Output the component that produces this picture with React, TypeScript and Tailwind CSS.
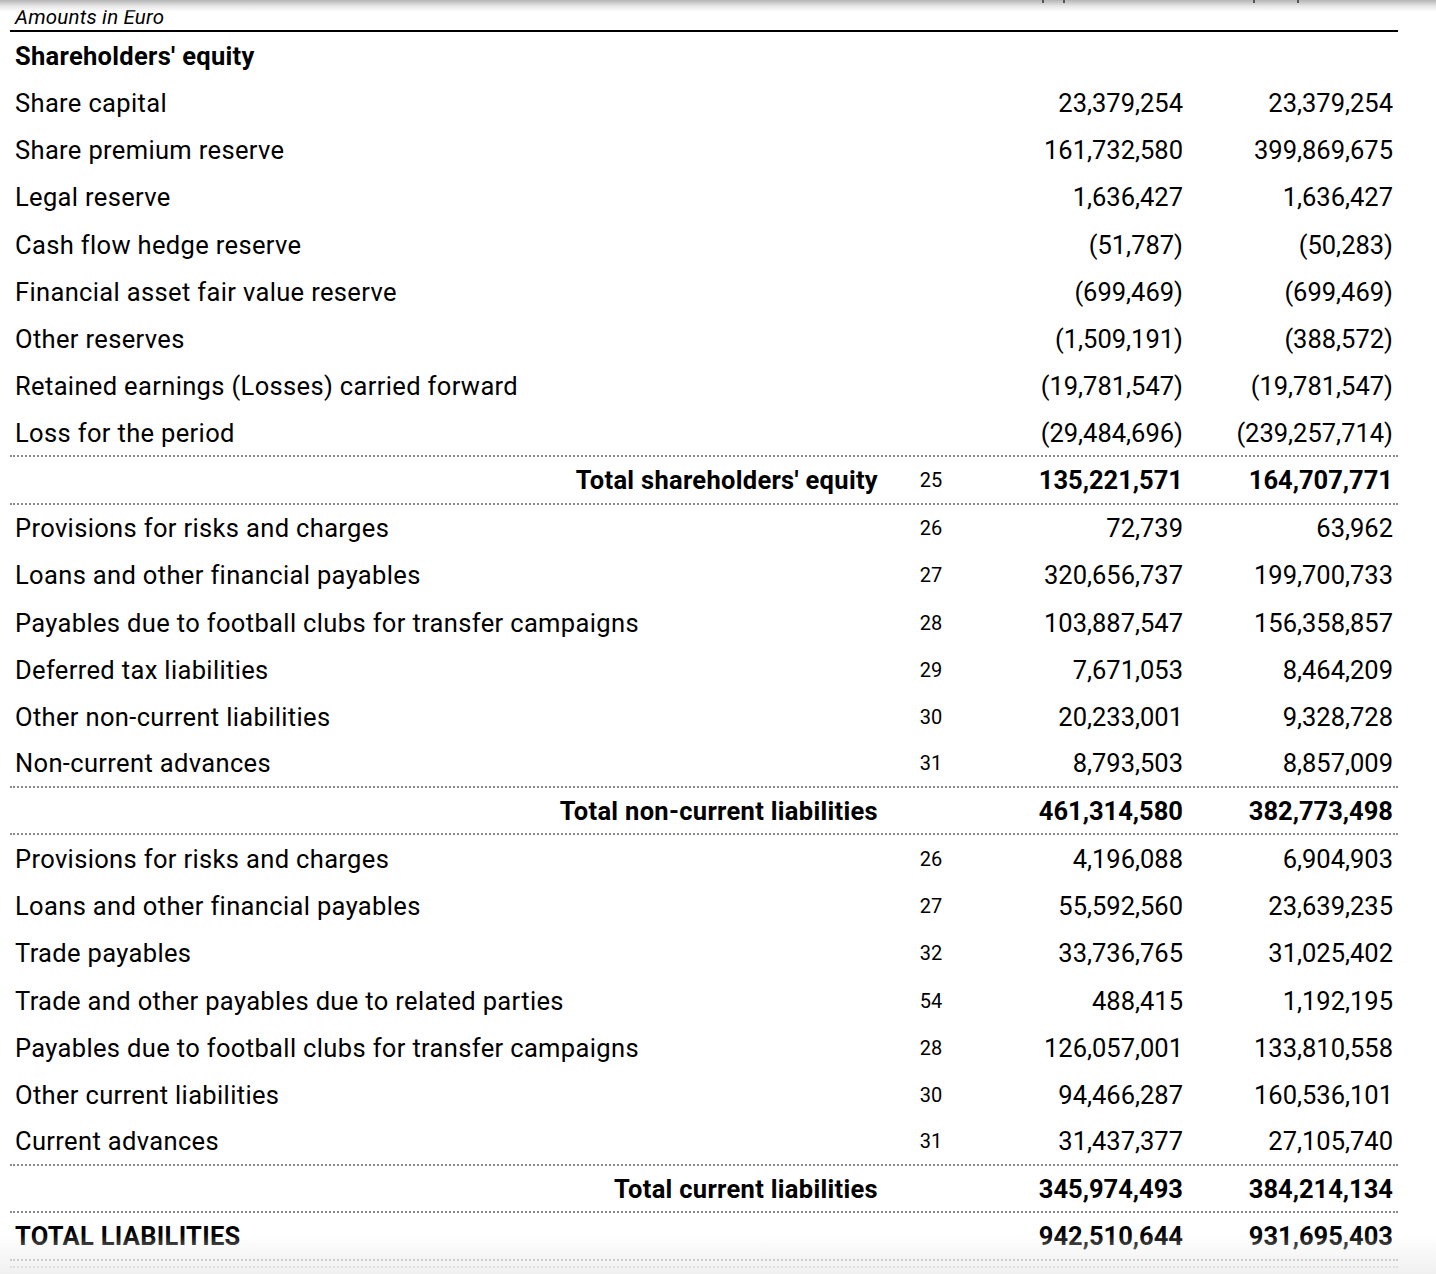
import React from "react";

type Row = {
  label: string;
  note?: string;
  a?: string;
  b?: string;
  kind?: "head" | "total" | "grand";
  lineAfter?: boolean;
};

const rows: Row[] = [
  { label: "Shareholders' equity", kind: "head" },
  { label: "Share capital", a: "23,379,254", b: "23,379,254" },
  { label: "Share premium reserve", a: "161,732,580", b: "399,869,675" },
  { label: "Legal reserve", a: "1,636,427", b: "1,636,427" },
  { label: "Cash flow hedge reserve", a: "(51,787)", b: "(50,283)" },
  { label: "Financial asset fair value reserve", a: "(699,469)", b: "(699,469)" },
  { label: "Other reserves", a: "(1,509,191)", b: "(388,572)" },
  { label: "Retained earnings (Losses) carried forward", a: "(19,781,547)", b: "(19,781,547)" },
  { label: "Loss for the period", a: "(29,484,696)", b: "(239,257,714)", lineAfter: true },
  { label: "Total shareholders' equity", note: "25", a: "135,221,571", b: "164,707,771", kind: "total", lineAfter: true },
  { label: "Provisions for risks and charges", note: "26", a: "72,739", b: "63,962" },
  { label: "Loans and other financial payables", note: "27", a: "320,656,737", b: "199,700,733" },
  { label: "Payables due to football clubs for transfer campaigns", note: "28", a: "103,887,547", b: "156,358,857" },
  { label: "Deferred tax liabilities", note: "29", a: "7,671,053", b: "8,464,209" },
  { label: "Other non-current liabilities", note: "30", a: "20,233,001", b: "9,328,728" },
  { label: "Non-current advances", note: "31", a: "8,793,503", b: "8,857,009", lineAfter: true },
  { label: "Total non-current liabilities", a: "461,314,580", b: "382,773,498", kind: "total", lineAfter: true },
  { label: "Provisions for risks and charges", note: "26", a: "4,196,088", b: "6,904,903" },
  { label: "Loans and other financial payables", note: "27", a: "55,592,560", b: "23,639,235" },
  { label: "Trade payables", note: "32", a: "33,736,765", b: "31,025,402" },
  { label: "Trade and other payables due to related parties", note: "54", a: "488,415", b: "1,192,195" },
  { label: "Payables due to football clubs for transfer campaigns", note: "28", a: "126,057,001", b: "133,810,558" },
  { label: "Other current liabilities", note: "30", a: "94,466,287", b: "160,536,101" },
  { label: "Current advances", note: "31", a: "31,437,377", b: "27,105,740", lineAfter: true },
  { label: "Total current liabilities", a: "345,974,493", b: "384,214,134", kind: "total", lineAfter: true },
  { label: "TOTAL LIABILITIES", a: "942,510,644", b: "931,695,403", kind: "grand", lineAfter: true },
];

function TableRow({ r }: { r: Row }) {
  const bold = r.kind === "head" || r.kind === "total" || r.kind === "grand";
  const labelAlign = r.kind === "total" ? "justify-end pr-[2px]" : "justify-start pl-[5px]";
  const labelFont = bold ? "font-bold tracking-[0.3px]" : "tracking-[0.35px]";
  return (
    <div
      className={
        "grid grid-cols-[870px_102px_206px_210px] h-[47.25px] items-center " +
        (r.lineAfter ? "border-b-2 border-dotted border-[#8a8a8a]" : "")
      }
    >
      <div className={"flex whitespace-nowrap " + labelAlign + " text-[25.5px] text-black " + labelFont}>
        {r.label}
      </div>
      <div className="text-center text-[20px] text-black">{r.note ?? ""}</div>
      <div className={"text-right pr-[5px] text-[25.5px] text-black " + (bold ? "font-bold" : "")}>{r.a ?? ""}</div>
      <div className={"text-right pr-[5px] text-[25.5px] text-black " + (bold ? "font-bold" : "")}>{r.b ?? ""}</div>
    </div>
  );
}

export default function App() {
  return (
    <div
      className="relative h-[1274px] w-[1436px] overflow-hidden bg-white"
      style={{ fontFamily: "Roboto, 'Liberation Sans', sans-serif" }}
    >
      <div className="ml-[10px] w-[1388px]">
        <div className="h-[32px] flex items-end pb-[3px] pl-[5px] border-b-2 border-black">
          <span className="italic text-[20.5px] tracking-[0.2px] leading-none text-black">Amounts in Euro</span>
        </div>
        {rows.map((r, i) => (
          <TableRow key={i} r={r} />
        ))}
        <div className="mt-[5px] border-b-2 border-dotted border-[#8a8a8a]" />
      </div>

      <div className="pointer-events-none absolute inset-x-0 top-0 h-[12px] bg-gradient-to-b from-[#b4b4b4] via-[#e6e6e6] to-transparent" />
      <div className="pointer-events-none absolute left-[1042px] top-0 flex gap-[19px]">
        <div className="h-[3px] w-[2px] bg-[#555]" />
        <div className="h-[3px] w-[2px] bg-[#555]" />
      </div>
      <div className="pointer-events-none absolute left-[1253px] top-0 flex gap-[42px]">
        <div className="h-[3px] w-[2px] bg-[#555]" />
        <div className="h-[3px] w-[2px] bg-[#555]" />
      </div>
      <div className="pointer-events-none absolute inset-x-0 bottom-0 h-[40px] bg-gradient-to-b from-transparent to-[#f0f0f0]" />
    </div>
  );
}
